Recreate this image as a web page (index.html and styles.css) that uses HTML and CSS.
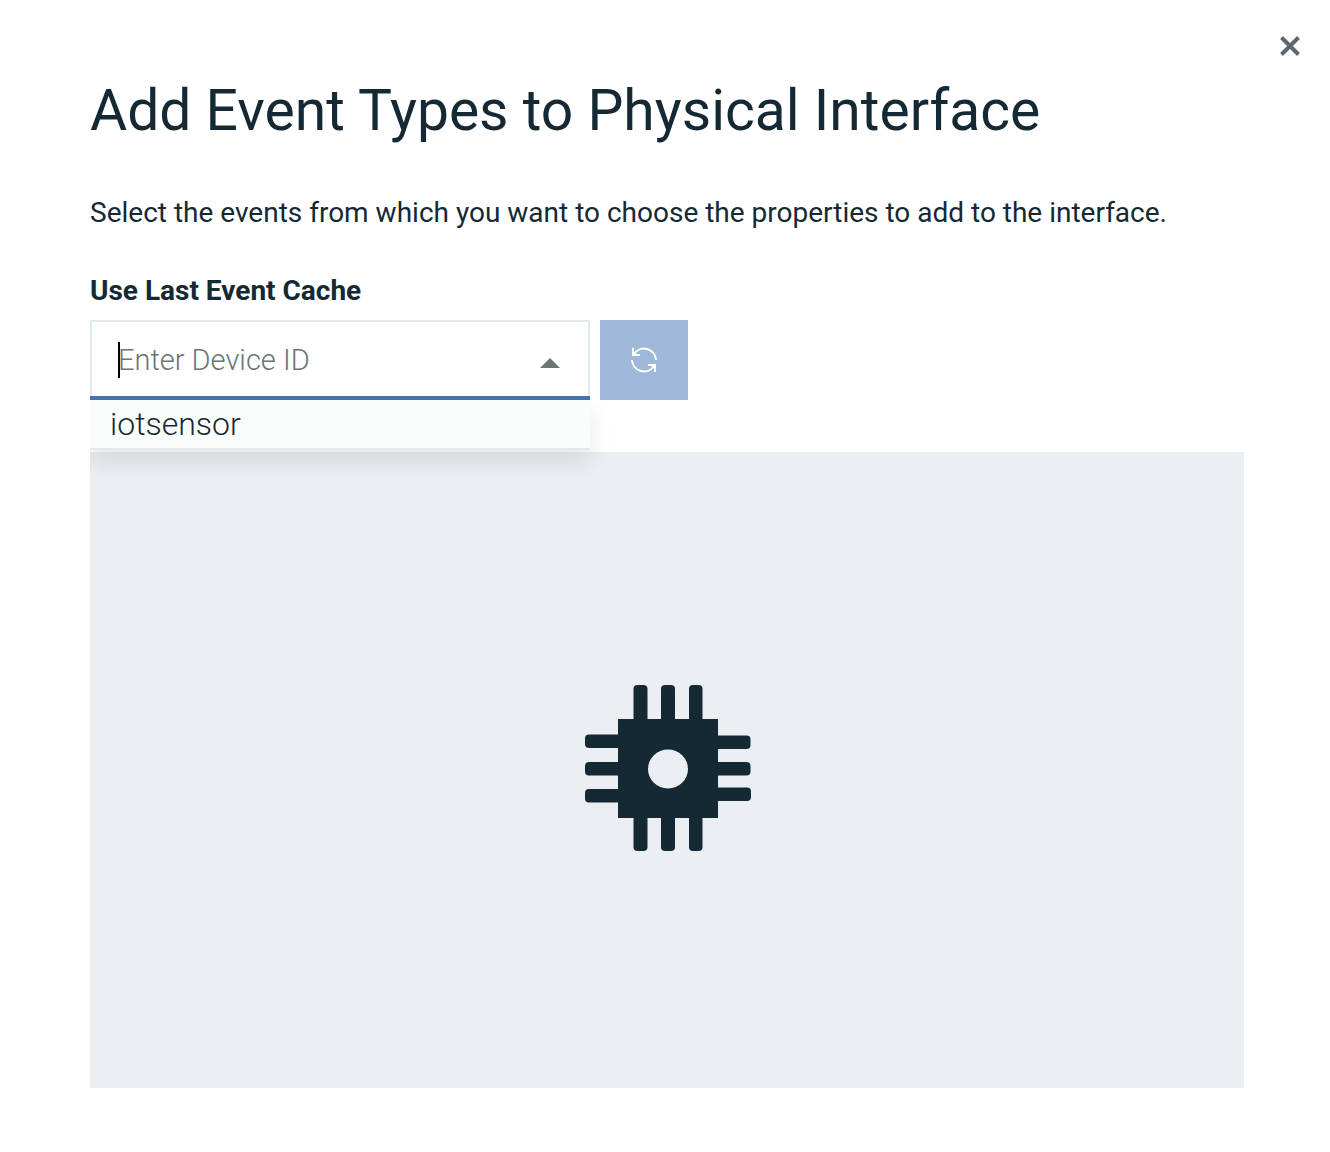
FILE: index.html
```html
<!DOCTYPE html>
<html lang="en">
<head>
<meta charset="utf-8">
<meta name="viewport" content="width=device-width, initial-scale=1">
<title>Add Event Types to Physical Interface</title>
<link rel="stylesheet" href="styles.css">
</head>
<body>
<main class="dialog">
  <header class="dialog-bar">
    <button class="close" type="button" aria-label="Close">
      <svg width="20" height="20" viewBox="0 0 20 20" aria-hidden="true"><path d="M1.500 1.500 18.500 18.500M18.500 1.500 1.500 18.500" fill="none" stroke="#5a6872" stroke-width="4"/></svg>
    </button>
  </header>
  <div class="content">
    <h1 class="title">Add Event Types to Physical Interface</h1>
    <p class="intro">Select the events from which you want to choose the properties to add to the interface.</p>
    <label class="label" for="device">Use Last Event Cache</label>
    <div class="controls">
      <div class="combo">
        <input class="combo-input" id="device" type="text" placeholder="Enter Device ID" role="combobox" aria-expanded="true" aria-controls="devices" autocomplete="off">
        <span class="caret"></span>
        <svg class="arrow" width="20" height="10" viewBox="0 0 20 10" aria-hidden="true"><path d="M0 10 10 0 20 10z" fill="#6a7574"/></svg>
        <ul class="menu" id="devices" role="listbox">
          <li class="option" role="option">iotsensor</li>
        </ul>
      </div>
      <button class="refresh" type="button" aria-label="Refresh">
        <svg width="26" height="26" viewBox="0 0 26 26" fill="none" stroke="#fff" stroke-width="2" aria-hidden="true">
          <path d="M25 13A12 12 0 0 0 3 7M1 13a12 12 0 0 0 22 6"/>
          <path d="M2 1v7h7M17 18h7v7"/>
          <path d="M2 8 5 4.500M24 18 21 21.500"/>
        </svg>
      </button>
    </div>
    <section class="panel" aria-label="Event properties">
      <svg width="166" height="166" viewBox="0 0 166 166" fill="#152934" aria-hidden="true">
        <path fill-rule="evenodd" d="M33 34h100v99H33zM83 64.500a20 19.500 0 1 0 0 39 20 19.500 0 1 0 0-39z"/>
        <rect x="48.500" width="14" height="40" rx="4"/>
        <rect x="76" width="14" height="40" rx="4"/>
        <rect x="104" width="13.500" height="40" rx="4"/>
        <rect x="48.500" y="126" width="14" height="40" rx="4"/>
        <rect x="76" y="126" width="14" height="40" rx="4"/>
        <rect x="104" y="126" width="13.500" height="40" rx="4"/>
        <rect y="49.500" width="40" height="13.500" rx="4"/>
        <rect y="77" width="40" height="13.500" rx="4"/>
        <rect y="104" width="40" height="13.500" rx="4"/>
        <rect x="126" y="50.500" width="39.500" height="13.500" rx="4"/>
        <rect x="126" y="77" width="39.500" height="13.500" rx="4"/>
        <rect x="126" y="102.500" width="40" height="13.500" rx="4"/>
      </svg>
    </section>
  </div>
</main>
</body>
</html>
```

FILE: styles.css
```css
* {
  box-sizing: border-box;
}

body {
  margin: 0;
  background: #fff;
  color: #152934;
  font-family: Roboto, "Liberation Sans", sans-serif;
}

.dialog {
  min-height: 100vh;
  display: flex;
  flex-direction: column;
}

.dialog-bar {
  display: flex;
  justify-content: flex-end;
  padding: 28px 22px 0 0;
}

.close {
  display: flex;
  padding: 8px;
  border: 0;
  background: none;
}

.content {
  flex: 1;
  display: flex;
  flex-direction: column;
  padding: 13px 86px 64px 90px;
}

.title {
  margin: 0;
  font-size: 57px;
  line-height: 68px;
  font-weight: 400;
}

.intro {
  margin: 48px 0 0;
  font-size: 28px;
  line-height: 40px;
}

.label {
  margin-top: 38px;
  font-size: 28px;
  line-height: 40px;
  font-weight: 700;
}

.controls {
  display: flex;
  gap: 10px;
  margin-top: 9px;
}

.combo {
  position: relative;
  flex: 0 1 500px;
}

.combo-input {
  display: block;
  width: 100%;
  height: 80px;
  padding: 0 60px 0 28px;
  border: 0;
  border-radius: 0;
  outline: 0;
  background: #fff;
  box-shadow: inset 0 -4px #4673b3, inset 0 0 0 2px #dfebeb;
  color: inherit;
  font: 300 29px/40px Roboto, "Liberation Sans", sans-serif;
}

.combo-input::placeholder {
  color: #6a7574;
  opacity: 1;
}

.caret {
  position: absolute;
  top: 22px;
  left: 28px;
  width: 2px;
  height: 36px;
  background: #000;
}

.arrow {
  position: absolute;
  top: 38px;
  right: 30px;
}

.menu {
  position: absolute;
  top: 100%;
  left: 0;
  right: 0;
  margin: 0;
  padding: 0;
  list-style: none;
  background: #fbfcfc;
  border-bottom: 2px solid #dfebeb;
  box-shadow: 0 12px 24px rgba(0, 0, 0, 0.1);
  clip-path: inset(0 -40px -40px 0);
}

.option {
  padding: 1px 20px 0;
  font-size: 32px;
  line-height: 47px;
  font-weight: 300;
}

.refresh {
  display: flex;
  align-items: center;
  justify-content: center;
  width: 88px;
  padding: 0;
  border: 0;
  background: #9fb7d8;
}

.panel {
  flex: 1;
  display: flex;
  align-items: center;
  justify-content: center;
  margin-top: 52px;
  padding: 40px 40px 44px 42px;
  background: #ebeff2;
}
```
